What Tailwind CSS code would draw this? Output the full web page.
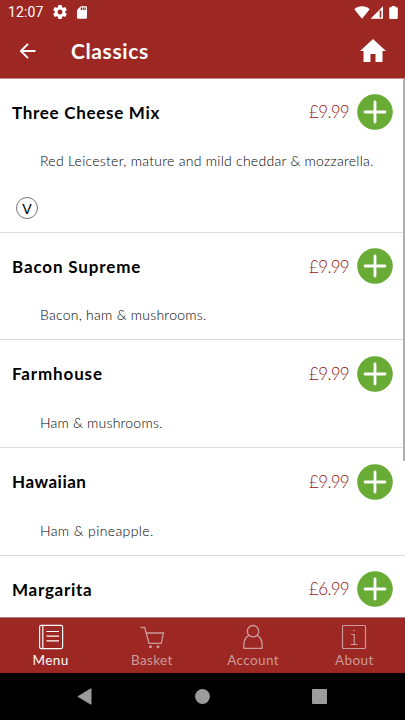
<!DOCTYPE html>
<html lang="en">
<head>
<meta charset="utf-8">
<title>Classics</title>
<script src="https://cdn.jsdelivr.net/npm/@tailwindcss/browser@4"></script>
</head>
<body class="w-[405px] h-[720px] overflow-hidden bg-white font-['Lato',sans-serif]">
<svg class="hidden">
  <symbol id="plus" viewBox="0 0 36 36"><circle cx="18" cy="18" r="17.8" fill="#68ab35"/><path d="M18 8v20M8 18h20" stroke="#fff" stroke-width="2.8" stroke-linecap="round"/></symbol>
</svg>
<div class="relative flex flex-col h-[720px]">
  <header class="h-[79px] shrink-0 bg-[#9c2723] text-white border-b border-[#c78a87] flex flex-col">
    <div class="h-6 flex items-center pl-2 pr-[7px] shrink-0">
      <span class="font-['Roboto',sans-serif] text-[14px] leading-6 w-[46px] tracking-[0.1px] whitespace-nowrap">12:07</span>
      <svg class="w-[14px] h-[14px] -ml-[1px]" viewBox="2 2 20 20" fill="#fff"><path d="M19.43 12.98c.04-.32.07-.64.07-.98s-.03-.66-.07-.98l2.11-1.65c.19-.15.24-.42.12-.64l-2-3.46c-.12-.22-.39-.3-.61-.22l-2.49 1c-.52-.4-1.08-.73-1.69-.98l-.38-2.65C14.46 2.18 14.25 2 14 2h-4c-.25 0-.46.18-.49.42l-.38 2.65c-.61.25-1.17.59-1.69.98l-2.49-1c-.23-.09-.49 0-.61.22l-2 3.46c-.13.22-.07.49.12.64l2.11 1.65c-.04.32-.07.65-.07.98s.03.66.07.98l-2.11 1.65c-.19.15-.24.42-.12.64l2 3.46c.12.22.39.3.61.22l2.49-1c.52.4 1.08.73 1.69.98l.38 2.65c.03.24.24.42.49.42h4c.25 0 .46-.18.49-.42l.38-2.65c.61-.25 1.17-.59 1.69-.98l2.49 1c.23.09.49 0 .61-.22l2-3.46c.12-.22.07-.49-.12-.64l-2.11-1.65zM12 15.5c-1.93 0-3.5-1.57-3.5-3.5s1.57-3.5 3.5-3.5 3.5 1.57 3.5 3.5-1.57 3.5-3.5 3.5z"/></svg>
      <svg class="w-[10px] h-[13px] ml-[10px]" viewBox="4 2 16 20" fill="#fff"><path d="M18 2h-8L4.02 8 4 20c0 1.1.9 2 2 2h12c1.1 0 2-.9 2-2V4c0-1.1-.9-2-2-2zm-6 6h-2V4h2v4zm3 0h-2V4h2v4zm3 0h-2V4h2v4z"/></svg>
      <svg class="w-[16px] h-[13px] ml-auto" viewBox="0 0 16 13" fill="#fff"><path d="M8 12.8.3 3.2C2.5 1.2 5 .3 8 .3s5.5.9 7.7 2.9z"/></svg>
      <svg class="w-[14px] h-[13px]" viewBox="0 0 14 13"><path d="M.5 12.8 13 .3v12.5z" fill="#fff"/><path d="M9.700 4.500v7h1.600v-7z" fill="#9c2723"/></svg>
      <svg class="w-[9px] h-[13px] ml-[5px]" viewBox="0 0 9 13" fill="#fff"><path d="M2.7 0h3.6v1.3H8q.8 0 .8.8v10q0 .8-.8.8H1q-.8 0-.8-.8v-10q0-.8.8-.8h1.7z"/></svg>
    </div>
    <div class="flex-1 flex items-center pl-5 pr-[19px]">
      <svg class="w-4 h-4" viewBox="0 0 16 16" fill="none" stroke="#fff" stroke-width="1.9"><path d="M15.5 8H1.5M8 .8.9 8 8 15.2"/></svg>
      <h1 class="ml-[35px] text-[21px] leading-[28px] font-bold tracking-[0.6px]">Classics</h1>
      <svg class="w-[26px] h-[23px] ml-auto -mt-[1px]" viewBox="0 0 26 23" fill="#fff"><path d="M13 0 0 12h3.5v11H10.500v-8h5v8h7V12H26z"/></svg>
    </div>
  </header>
  <main class="h-[538px] shrink-0 overflow-hidden">
    <section class="h-[153.8px] border-b border-[#dcdcdc] pt-[15px]">
      <div class="h-9 flex items-center pl-3 pr-3"><h2 class="text-[17px] font-bold tracking-[0.7px] pt-[1px]">Three Cheese Mix</h2><span class="ml-auto mr-2 text-[17px] font-light text-[#911512] tracking-[-0.7px]">£9.99</span><svg class="w-9 h-9"><use href="#plus"/></svg></div>
      <p class="mt-[21px] pl-10 text-[14px] leading-5 font-light text-black tracking-[0.265px] whitespace-nowrap">Red Leicester, mature and mild cheddar &amp; mozzarella.</p>
      <div class="mt-[26px] ml-4 w-[22px] h-[22px] rounded-full border border-[#777] flex items-center justify-center pt-[1px] text-[14px] leading-none text-black">V</div>
    </section>
    <section class="h-[107.7px] border-b border-[#dcdcdc] pt-[15.7px]">
      <div class="h-9 flex items-center pl-3 pr-3"><h2 class="text-[17px] font-bold tracking-[0.85px] pt-[1px]">Bacon Supreme</h2><span class="ml-auto mr-2 text-[17px] font-light text-[#911512] tracking-[-0.7px]">£9.99</span><svg class="w-9 h-9"><use href="#plus"/></svg></div>
      <p class="mt-[21px] pl-10 text-[14px] leading-5 font-light text-black tracking-[0.25px]">Bacon, ham &amp; mushrooms.</p>
    </section>
    <section class="h-[107.7px] border-b border-[#dcdcdc] pt-[15.7px]">
      <div class="h-9 flex items-center pl-3 pr-3"><h2 class="text-[17px] font-bold tracking-[0.85px]">Farmhouse</h2><span class="ml-auto mr-2 text-[17px] font-light text-[#911512] tracking-[-0.7px]">£9.99</span><svg class="w-9 h-9"><use href="#plus"/></svg></div>
      <p class="mt-[21px] pl-10 text-[14px] leading-5 font-light text-black tracking-[0.22px]">Ham &amp; mushrooms.</p>
    </section>
    <section class="h-[107.7px] border-b border-[#dcdcdc] pt-[15.7px]">
      <div class="h-9 flex items-center pl-3 pr-3"><h2 class="text-[17px] font-bold tracking-[0.5px]">Hawaiian</h2><span class="ml-auto mr-2 text-[17px] font-light text-[#911512] tracking-[-0.7px]">£9.99</span><svg class="w-9 h-9"><use href="#plus"/></svg></div>
      <p class="mt-[21px] pl-10 text-[14px] leading-5 font-light text-black tracking-[0.38px]">Ham &amp; pineapple.</p>
    </section>
    <section class="pt-[15.2px]">
      <div class="h-9 flex items-center pl-3 pr-3"><h2 class="text-[17px] font-bold tracking-[0.72px] pt-[1px]">Margarita</h2><span class="ml-auto mr-2 text-[17px] font-light text-[#911512] tracking-[-0.7px]">£6.99</span><svg class="w-9 h-9"><use href="#plus"/></svg></div>
    </section>
  </main>
  <div class="absolute right-0 top-[79px] w-[2px] h-[382px] bg-[#b0b0b0]"></div>
  <nav class="h-[56px] shrink-0 bg-[#9c2723] border-t border-[#a9827f] grid grid-cols-4 text-[13.5px] leading-[18px] tracking-[0.4px] text-[#c99b98]">
    <div class="flex flex-col items-center pt-[6px] text-white"><svg class="w-[26px] h-[26px]" viewBox="0 0 26 26" fill="none" stroke="#fff" stroke-width="1.2"><rect x="1.6" y="1.4" width="23" height="23.2" rx="1.5"/><path d="M4.8 1.4v23.2M8.5 7.5h12.500M8.500 12.200h12.500M8.500 16.900h12.500"/></svg><span class="mt-[1px]">Menu</span></div>
    <div class="flex flex-col items-center pt-[6px]"><svg class="w-[26px] h-[26px]" viewBox="0 0 26 26" fill="none" stroke="#c99b98" stroke-width="1.3"><path d="M1.500 3.500h4.200l4.300 15.800h12.300L24.500 9H7.200"/><circle cx="11.500" cy="22.800" r="1.500" fill="#c99b98" stroke="none"/><circle cx="19" cy="22.800" r="1.500" fill="#c99b98" stroke="none"/></svg><span class="mt-[1px]">Basket</span></div>
    <div class="flex flex-col items-center pt-[6px]"><svg class="w-[26px] h-[26px]" viewBox="0 0 26 26" fill="none" stroke="#c99b98" stroke-width="1.3"><circle cx="13" cy="7.200" r="5.700"/><path d="M8.800 11.300C5.500 13 3.900 17 3.900 21v3.300h18.200V21c0-4-1.600-8-4.900-9.700"/></svg><span class="mt-[1px]">Account</span></div>
    <div class="flex flex-col items-center pt-[6px]"><svg class="w-[26px] h-[26px]" viewBox="0 0 26 26" fill="none" stroke="#c99b98" stroke-width="1.2"><rect x="1.500" y="1.500" width="23" height="23" rx="1"/><path d="M10.200 10.500h3v10M9.800 20.500h6.800M12.200 6.500h1.600"/></svg><span class="mt-[1px]">About</span></div>
  </nav>
  <footer class="h-[47px] shrink-0 bg-black flex items-center justify-between pl-[77px] pr-[78px]">
    <svg class="w-[15px] h-[17px]" viewBox="0 0 15 17" fill="#9c9c9c"><path d="M.3 8.500 13.500.5q1-.4 1 .8v14.400q0 1.200-1 .8z"/></svg>
    <svg class="w-[15px] h-[15px]" viewBox="0 0 15 15"><circle cx="7.500" cy="7.500" r="7.400" fill="#9c9c9c"/></svg>
    <div class="w-[15px] h-[15px] rounded-[1px] bg-[#9c9c9c]"></div>
  </footer>
</div>
</body>
</html>
